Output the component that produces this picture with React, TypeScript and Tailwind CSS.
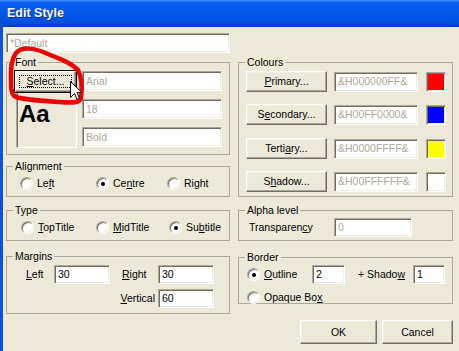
import React from "react";

type C = { children?: React.ReactNode; className?: string };

const U = ({ children }: C) => <span className="underline underline-offset-[1px]">{children}</span>;

function TextBox({ value, disabled, className }: { value: string; disabled?: boolean; className?: string }) {
  return (
    <div
      className={`flex items-center bg-white pl-[3px] border border-t-[#aca899] border-l-[#aca899] border-b-white border-r-white shadow-[inset_1px_1px_0_#716f64,inset_-1px_-1px_0_#f1efe2] ${
        disabled ? "text-[#aca899]" : "text-black"
      } ${className ?? ""}`}
    >
      {value}
    </div>
  );
}

function Button({ children, className }: C) {
  return (
    <div
      className={`flex items-center justify-center bg-[#ece9d8] border border-t-white border-l-white border-b-[#716f64] border-r-[#716f64] shadow-[inset_-1px_-1px_0_#aca899,inset_1px_1px_0_#f1efe2] ${className ?? ""}`}
    >
      {children}
    </div>
  );
}

function Radio({ checked }: { checked?: boolean }) {
  return (
    <div className="w-[13px] h-[13px] shrink-0 rounded-full bg-white border border-t-[#aca899] border-l-[#aca899] border-b-white border-r-white shadow-[inset_1px_1px_0_#716f64,inset_-1px_-1px_0_#f1efe2] flex items-center justify-center">
      {checked && <div className="w-[4px] h-[4px] rounded-full bg-black" />}
    </div>
  );
}

function RadioItem({ checked, children, className }: C & { checked?: boolean }) {
  return (
    <div className={`flex items-center gap-[4px] ${className ?? ""}`}>
      <Radio checked={checked} />
      <span>{children}</span>
    </div>
  );
}

function Group({ label, className, children }: C & { label: string }) {
  return (
    <fieldset className={`border border-[#aca899] m-0 p-0 min-w-0 ${className ?? ""}`}>
      <legend className="ml-[6px] px-[2px] leading-[13px]">{label}</legend>
      {children}
    </fieldset>
  );
}

function Swatch({ color }: { color: string }) {
  return (
    <div
      className={`ml-[8px] w-[20px] h-[20px] border border-t-[#aca899] border-l-[#aca899] border-b-white border-r-white shadow-[inset_1px_1px_0_#716f64,inset_-1px_-1px_0_#f1efe2] ${color}`}
    />
  );
}

export default function App() {
  return (
    <div className="relative w-[459px] h-[351px] overflow-hidden bg-[#ece9d8] font-['Liberation_Sans',Arial,sans-serif] text-[10.5px] leading-[13px] text-black">
      <div className="h-[27px] flex items-center pl-[7px] bg-[linear-gradient(to_bottom,#3d8ff9_0%,#0a5ef0_10%,#0058ea_50%,#0050de_85%,#0041bb_100%)] text-white font-bold text-[12.5px] [text-shadow:1px_1px_0_#0a2a9a]">
        Edit Style
      </div>
      <div className="flex h-[324px]">
        <div className="w-[3px] bg-[#0b52e0]" />
        <div className="flex gap-[8px] pl-[3px] pt-[6px]">
          {/* Left column */}
          <div className="w-[224px] flex flex-col">
            <TextBox value="*Default" disabled className="h-[20px]" />
            <Group label="Font" className="mt-[3px] h-[99px]">
              <div className="flex pl-[7px] pt-[1px]">
                <div className="w-[63px] flex flex-col">
                  <div className="border border-black">
                    <Button className="h-[21px] p-[3px]">
                      <div className="w-full h-full border border-dotted border-black flex items-center justify-center">
                        <span>
                          <U>S</U>elect...
                        </span>
                      </div>
                    </Button>
                  </div>
                  <div className="ml-[2px] w-[61px] h-[55px] border border-t-0 border-l-[#aca899] border-b-white border-r-white shadow-[inset_1px_0_0_#716f64,inset_-1px_-1px_0_#f1efe2] pl-[2px] pt-[9px]">
                    <span className="font-bold text-[24px] leading-[24px] font-['Liberation_Sans',Arial,sans-serif]">Aa</span>
                  </div>
                </div>
                <div className="ml-[5px] pt-[1px] flex flex-col gap-[8px]">
                  <TextBox value="Arial" disabled className="w-[140px] h-[20px]" />
                  <TextBox value="18" disabled className="w-[140px] h-[20px]" />
                  <TextBox value="Bold" disabled className="w-[140px] h-[20px]" />
                </div>
              </div>
            </Group>
            <Group label="Alignment" className="mt-[5px] h-[37px]">
              <div className="flex items-center pt-[4px] pl-[13px]">
                <RadioItem className="w-[76px]">
                  Le<U>f</U>t
                </RadioItem>
                <RadioItem checked className="w-[71px]">
                  Ce<U>n</U>tre
                </RadioItem>
                <RadioItem>
                  Ri<U>g</U>ht
                </RadioItem>
              </div>
            </Group>
            <Group label="Type" className="mt-[7px] h-[37px]">
              <div className="flex items-center pt-[4px] pl-[14px]">
                <RadioItem className="w-[75px]">
                  <U>T</U>opTitle
                </RadioItem>
                <RadioItem className="w-[73px]">
                  <U>M</U>idTitle
                </RadioItem>
                <RadioItem checked>
                  Su<U>b</U>title
                </RadioItem>
              </div>
            </Group>
            <Group label="Margins" className="mt-[9px] h-[64px]">
              <div className="pt-[2px]">
                <div className="flex items-center pl-[19px]">
                  <span className="w-[28px]">
                    <U>L</U>eft
                  </span>
                  <TextBox value="30" className="w-[56px] h-[19px]" />
                  <span className="ml-[12px] w-[36px]">
                    <U>R</U>ight
                  </span>
                  <TextBox value="30" className="w-[56px] h-[19px]" />
                </div>
                <div className="flex items-center mt-[5px]">
                  <span className="w-[151px] text-right pr-[3px]">
                    <U>V</U>ertical
                  </span>
                  <TextBox value="60" className="w-[56px] h-[19px]" />
                </div>
              </div>
            </Group>
          </div>

          {/* Right column */}
          <div className="w-[215px] flex flex-col">
            <Group label="Colours" className="mt-[23px] h-[141px]">
              <div className="pt-[2px] pl-[7px] flex flex-col">
                <div className="flex items-center h-[21px]">
                  <Button className="w-[81px] h-[21px]">
                    <span>
                      <U>P</U>rimary...
                    </span>
                  </Button>
                  <TextBox value="&H000000FF&" disabled className="ml-[7px] w-[84px] h-[20px]" />
                  <Swatch color="bg-[#ff0000]" />
                </div>
                <div className="flex items-center h-[21px] mt-[12px]">
                  <Button className="w-[81px] h-[21px]">
                    <span>
                      S<U>e</U>condary...
                    </span>
                  </Button>
                  <TextBox value="&H00FF0000&" disabled className="ml-[7px] w-[84px] h-[20px]" />
                  <Swatch color="bg-[#0000ff]" />
                </div>
                <div className="flex items-center h-[21px] mt-[13px]">
                  <Button className="w-[81px] h-[21px]">
                    <span>
                      Terti<U>a</U>ry...
                    </span>
                  </Button>
                  <TextBox value="&H0000FFFF&" disabled className="ml-[7px] w-[84px] h-[20px]" />
                  <Swatch color="bg-[#ffff00]" />
                </div>
                <div className="flex items-center h-[21px] mt-[12px]">
                  <Button className="w-[81px] h-[21px]">
                    <span>
                      S<U>h</U>adow...
                    </span>
                  </Button>
                  <TextBox value="&H00FFFFFF&" disabled className="ml-[7px] w-[84px] h-[20px]" />
                  <Swatch color="bg-white" />
                </div>
              </div>
            </Group>
            <Group label="Alpha level" className="mt-[7px] h-[37px]">
              <div className="flex items-center pt-[1px] pl-[10px]">
                <span className="w-[85px]">
                  Transparen<U>c</U>y
                </span>
                <TextBox value="0" disabled className="w-[78px] h-[19px]" />
              </div>
            </Group>
            <Group label="Border" className="mt-[10px] h-[53px]">
              <div className="pt-[1px] pl-[8px]">
                <div className="flex items-center">
                  <RadioItem checked className="w-[65px]">
                    <U>O</U>utline
                  </RadioItem>
                  <TextBox value="2" className="w-[33px] h-[19px]" />
                  <span className="ml-[13px] w-[55px]">
                    + Shado<U>w</U>
                  </span>
                  <TextBox value="1" className="w-[32px] h-[19px]" />
                </div>
                <RadioItem className="mt-[7px] h-[13px]">
                  Opaque Bo<U>x</U>
                </RadioItem>
              </div>
            </Group>
            <div className="flex justify-end gap-[5px] mt-[16px]">
              <Button className="w-[77px] h-[24px]">OK</Button>
              <Button className="w-[71px] h-[24px]">Cancel</Button>
            </div>
          </div>
        </div>
      </div>

      {/* Red annotation loop */}
      <svg className="absolute left-0 top-0 pointer-events-none" width="459" height="351" viewBox="0 0 459 351">
        <path
          d="M16,53 C22,46 35,48 48,54 C60,59 72,63 78,70 C82,78 82,90 81,98 C80,103 72,103 60,102 C45,101 25,100 16,97 C11,95 11,88 11,78 C11,68 11,60 16,53 Z"
          fill="none"
          stroke="#ee0000"
          strokeWidth="4.5"
          strokeLinecap="round"
          strokeLinejoin="round"
        />
      </svg>
      {/* Mouse cursor */}
      <svg className="absolute left-[70px] top-[81px] pointer-events-none" width="13" height="21" viewBox="0 0 13 21">
        <path d="M0.5,0.5 L0.5,16.5 L4.5,12.5 L7,18.5 L9.5,17.5 L7,11.5 L12,11.5 Z" fill="#fff" stroke="#000" strokeWidth="1" strokeLinejoin="miter" />
      </svg>
    </div>
  );
}
